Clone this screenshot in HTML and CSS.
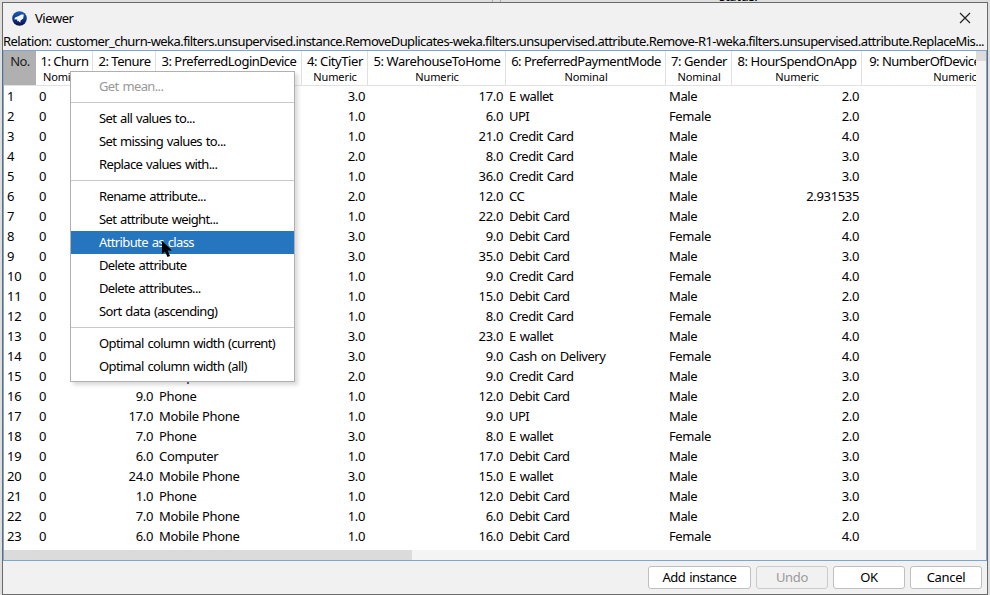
FILE: index.html
```html
<!DOCTYPE html>
<html lang="en">
<head>
<meta charset="utf-8">
<title>Viewer</title>
<link rel="stylesheet" href="styles.css">
</head>
<body>
<div class="backdrop"><span class="tick t1"></span><span class="tick t2"></span><span class="behind">status:</span></div>
<main class="window">
  <header class="titlebar">
    <svg class="logo" width="15" height="15" viewBox="0 0 15 15"><defs><linearGradient id="g" x1="0" y1="0" x2="0" y2="1"><stop offset="0" stop-color="#1d5cb0"/><stop offset=".45" stop-color="#123f91"/><stop offset="1" stop-color="#0b0b4c"/></linearGradient></defs><circle cx="7.5" cy="7.5" r="7.3" fill="url(#g)"/><path d="M11.8 3.4 9.3 3.5 6.8 5 3.5 6.3 2 8.2 5.3 8.5 5.2 10.4 6.3 9.7 8.2 11.7 8.6 9.6 11.2 7.6Z" fill="#f5f9ff"/></svg>
    <span class="title">Viewer</span>
    <svg class="close" width="12" height="12" viewBox="0 0 12 12"><path d="M1 1 11 11M11 1 1 11" stroke="#222" stroke-width="1.2"/></svg>
  </header>
  <div class="relation"><span>Relation: customer_churn-weka.filters.unsupervised.instance.RemoveDuplicates-weka.filters.unsupervised.attribute.Remove-R1-weka.filters.unsupervised.attribute.ReplaceMis...</span></div>
  <section class="pane">
    <div class="view">
      <div class="grid head" id="head"></div>
      <div class="rows" id="rows"></div>
    </div>
    <div class="vbar"><div class="vthumb"></div></div>
    <div class="hbar"><div class="hthumb"></div></div>
  </section>
  <footer class="buttons">
    <button class="add">Add instance</button><button disabled>Undo</button><button>OK</button><button>Cancel</button>
  </footer>
</main>
<nav class="menu">
  <div class="item off">Get mean...</div>
  <hr>
  <div class="item">Set all values to...</div>
  <div class="item">Set missing values to...</div>
  <div class="item">Replace values with...</div>
  <hr>
  <div class="item">Rename attribute...</div>
  <div class="item">Set attribute weight...</div>
  <div class="item active">Attribute as class</div>
  <div class="item">Delete attribute</div>
  <div class="item">Delete attributes...</div>
  <div class="item">Sort data (ascending)</div>
  <hr>
  <div class="item">Optimal column width (current)</div>
  <div class="item">Optimal column width (all)</div>
</nav>
<svg class="cursor" width="10" height="17" viewBox="0 0 10 17"><path d="M0 0V13L3 10.5 5.5 16 8 15 5.7 9.5H10Z" fill="#000"/></svg>
<script src="table.js"></script>
</body>
</html>
```
FILE: styles.css
```css
* { box-sizing: border-box; }
body { margin: 0; width: 990px; height: 595px; overflow: hidden; position: relative; background: #dedede; color: #000; font: 13px/20px "Noto Sans", "Open Sans", sans-serif; letter-spacing: -0.3px; }
.backdrop { position: absolute; inset: 0; overflow: hidden; }
.behind { position: absolute; left: 719px; top: -13px; line-height: 18px; }
.tick { position: absolute; top: 0; width: 1px; height: 2px; background: #aaa; }
.t1 { left: 492px; }
.t2 { left: 500px; }
.window { position: relative; width: 986px; height: 593px; margin: 2px 0 0 2px; border: 1px solid #6a6a6a; background: #f1f1f1; display: flex; flex-direction: column; }
.titlebar { height: 30px; display: flex; align-items: center; padding: 0 16px 0 9px; }
.title { margin-left: 8px; letter-spacing: -0.45px; }
.close { margin-left: auto; }
.relation { height: 17px; line-height: 17px; white-space: nowrap; overflow: hidden; letter-spacing: -0.57px; word-spacing: 1.5px; }
.pane { height: 511px; border: 1px solid #7ba7d4; background: #fff; display: grid; grid-template: 499px 10px / 972px 10px; }
.view { overflow: hidden; }
.grid { display: grid; grid-template-columns: 32px 57px 63px 146px 66px 138px 160px 66px 130px 186px; width: 1044px; white-space: nowrap; }
.head { height: 35px; border-bottom: 1px solid #e2e2e2; }
.hcell { border-right: 1px solid #e0e0e0; text-align: center; display: flex; flex-direction: column; line-height: 20px; padding-left: 1px; letter-spacing: -0.5px; }
.hcell small { font-size: 11px; line-height: 12px; letter-spacing: -0.1px; }
.h4, .h5, .h7, .h8 { letter-spacing: -0.42px; }
.corner { background: #b0b0b0; border-color: #b0b0b0; color: #202020; }
.cell { height: 20px; padding: 0 3px; }
.c6 { letter-spacing: -0.5px; word-spacing: 1.2px; }
.c6.debit { letter-spacing: -0.55px; }
.c7 { letter-spacing: -0.4px; }
.num { text-align: right; letter-spacing: -0.35px; }
.vbar { background: #f4f4f4; }
.vthumb { height: 10px; background: #dcdcdc; }
.hbar { grid-column: 1 / 3; background: #f4f4f4; }
.hthumb { height: 10px; width: 408px; background: #dbdbdb; }
.buttons { display: flex; justify-content: flex-end; gap: 5px; padding: 5px 5px 0 0; }
button { width: 72px; height: 23px; padding: 0 0 2px; border: 1px solid #bfbfbf; border-radius: 3px; background: #fff; color: #000; font: inherit; letter-spacing: inherit; }
.add { width: 103px; letter-spacing: -0.5px; word-spacing: 1px; }
button:disabled { background: #f1f1f1; color: #999; border-color: #cbcbcb; }
.menu { position: absolute; left: 70px; top: 71px; width: 225px; height: 311px; border: 1px solid #b0b0b0; background: #fff; padding: 3px 0; box-shadow: 3px 3px 4px rgba(0,0,0,.15); letter-spacing: -0.62px; word-spacing: 1px; }
.item { height: 23px; line-height: 23px; padding-left: 28px; white-space: nowrap; }
.off { color: #999; }
.active { background: #2675bf; color: #fff; }
hr { margin: 4px 0; height: 1px; border: 0; background: #c8c8c8; }
.cursor { position: absolute; left: 162px; top: 241px; }
```
FILE: table.js
```js
const columns = [
  ["No.", ""], ["1: Churn", "Nominal"], ["2: Tenure", "Numeric"],
  ["3: PreferredLoginDevice", "Nominal"], ["4: CityTier", "Numeric"],
  ["5: WarehouseToHome", "Numeric"], ["6: PreferredPaymentMode", "Nominal"],
  ["7: Gender", "Nominal"], ["8: HourSpendOnApp", "Numeric"],
  ["9: NumberOfDeviceRegistered", "Numeric"]
];
const data = `||3.0|17.0|E wallet|Male|2.0
||1.0|6.0|UPI|Female|2.0
||1.0|21.0|Credit Card|Male|4.0
||2.0|8.0|Credit Card|Male|3.0
||1.0|36.0|Credit Card|Male|3.0
||2.0|12.0|CC|Male|2.931535
||1.0|22.0|Debit Card|Male|2.0
||3.0|9.0|Debit Card|Female|4.0
||3.0|35.0|Debit Card|Male|3.0
||1.0|9.0|Credit Card|Female|4.0
||1.0|15.0|Debit Card|Male|2.0
||1.0|8.0|Credit Card|Female|3.0
||3.0|23.0|E wallet|Male|4.0
||3.0|9.0|Cash on Delivery|Female|4.0
|Computer|2.0|9.0|Credit Card|Male|3.0
9.0|Phone|1.0|12.0|Debit Card|Male|2.0
17.0|Mobile Phone|1.0|9.0|UPI|Male|2.0
7.0|Phone|3.0|8.0|E wallet|Female|2.0
6.0|Computer|1.0|17.0|Debit Card|Male|3.0
24.0|Mobile Phone|3.0|15.0|E wallet|Male|3.0
1.0|Phone|1.0|12.0|Debit Card|Male|3.0
7.0|Mobile Phone|1.0|6.0|Debit Card|Male|2.0
6.0|Mobile Phone|1.0|16.0|Debit Card|Female|4.0`;
const numeric = [2, 4, 5, 8];
document.getElementById("head").innerHTML = columns.map((c, i) =>
  `<div class="hcell h${i}${i ? "" : " corner"}"><span>${c[0]}</span><small>${c[1]}</small></div>`).join("");
document.getElementById("rows").innerHTML = data.split("\n").map((line, n) =>
  `<div class="grid">${[n + 1, 0, ...line.split("|")].map((v, i) =>
    `<div class="cell c${i}${numeric.includes(i) ? " num" : ""}${v === "Debit Card" ? " debit" : ""}">${v}</div>`).join("")}</div>`).join("");
```
